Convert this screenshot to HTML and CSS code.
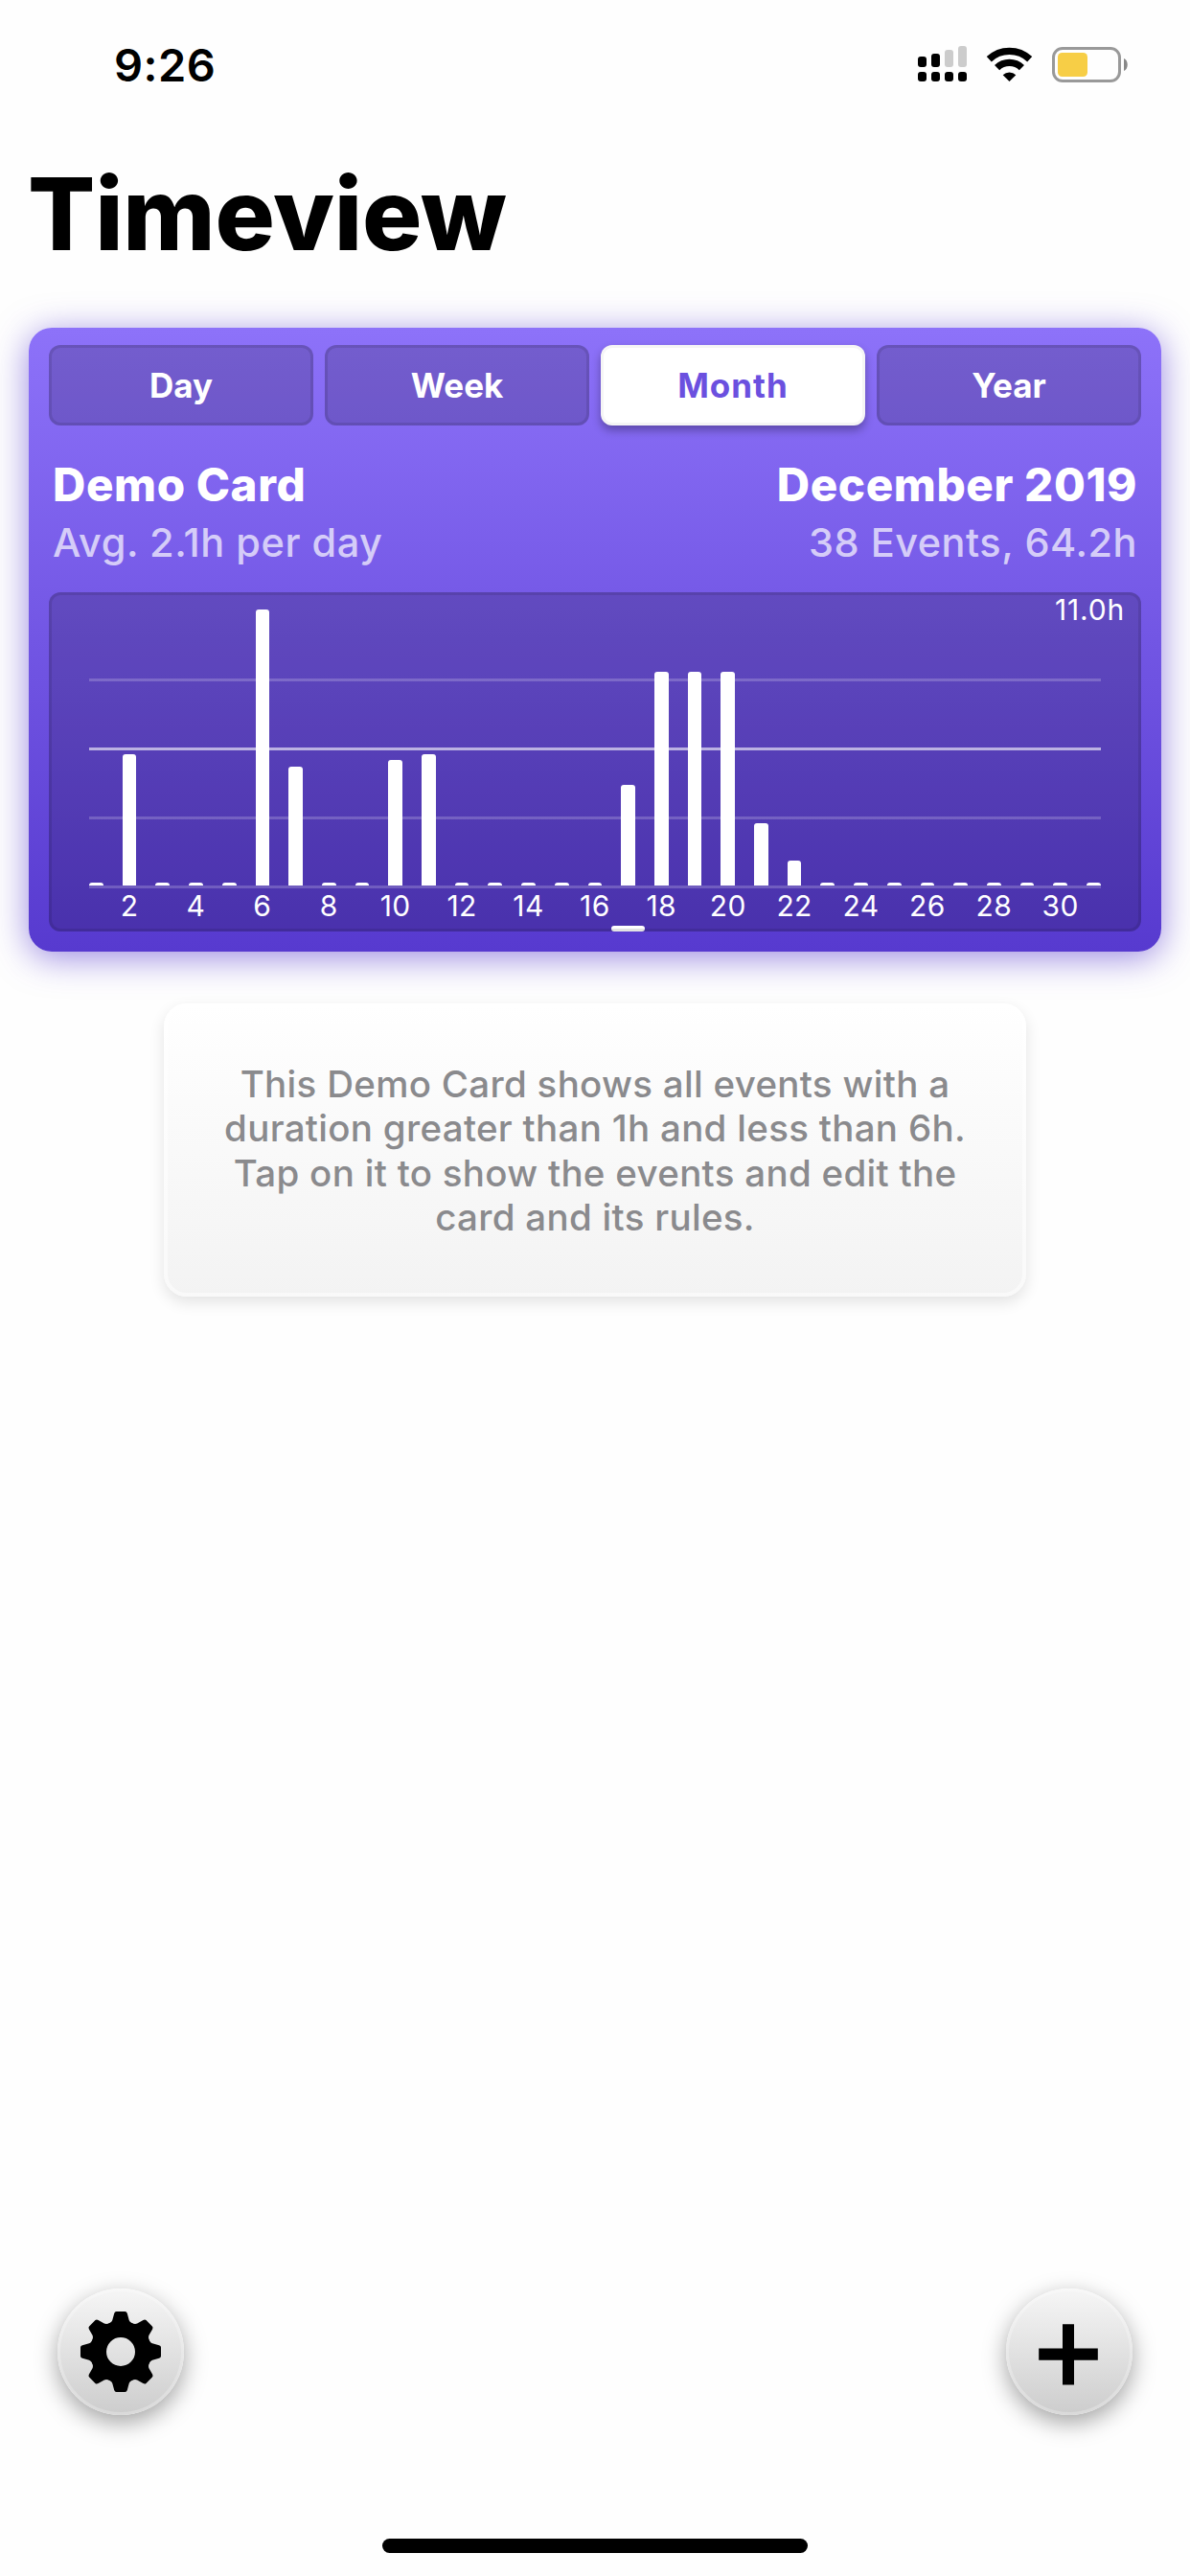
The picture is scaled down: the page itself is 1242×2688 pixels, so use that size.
FILE: index.html
```
<!DOCTYPE html>
<html lang="en">
<head>
  <meta charset="UTF-8">
  <title>Timeview</title>
  <link rel="stylesheet" href="styles.css">
</head>
<body>
  <div class="status-bar">
    <span class="time">9:26</span>
    <svg class="status-icons" width="220" height="38" viewBox="0 0 220 38">
      <g>
        <rect x="0" y="11" width="9" height="11" rx="3"/>
        <rect x="14" y="8" width="9" height="14" rx="3"/>
        <rect x="28" y="4" width="9" height="18" rx="3" fill="#ccc"/>
        <rect x="42" y="0" width="9" height="22" rx="3" fill="#ccc"/>
        <rect x="0" y="27" width="9" height="10" rx="3"/>
        <rect x="14" y="27" width="9" height="10" rx="3"/>
        <rect x="28" y="27" width="9" height="10" rx="3"/>
        <rect x="42" y="27" width="9" height="10" rx="3"/>
      </g>
      <g fill="none" stroke="#000" stroke-width="7.4">
        <path d="M74.3 13.8 A31 31 0 0 1 116.7 13.8"/>
        <path d="M82.6 22.6 A18.5 18.5 0 0 1 108.4 22.6"/>
      </g>
      <path d="M95.5 37 L88.7 30.3 A9.7 9.7 0 0 1 102.3 30.3 Z"/>
      <rect x="141.5" y="2.5" width="69" height="34" rx="9.5" fill="none" stroke="#999" stroke-width="3"/>
      <rect x="146" y="7" width="31" height="25" rx="4.5" fill="#f7ce46"/>
      <path d="M215 13 C220 15 220 24 215 26 Z" fill="#888"/>
    </svg>
  </div>

  <h1>Timeview</h1>

  <div class="card">
    <div class="tabs">
      <div class="tab">Day</div>
      <div class="tab">Week</div>
      <div class="tab active">Month</div>
      <div class="tab">Year</div>
    </div>
    <div class="row title"><span>Demo Card</span><span>December 2019</span></div>
    <div class="row sub"><span>Avg. 2.1h per day</span><span>38 Events, 64.2h</span></div>
    <div class="chart">
      <span class="max">11.0h</span>
      <div class="plot">
        <div class="bars" id="bars"></div>
      </div>
      <div class="axis" id="axis"></div>
    </div>
  </div>

  <div class="hint">This Demo Card shows all events with a<br>duration greater than 1h and less than 6h.<br>Tap on it to show the events and edit the<br>card and its rules.</div>

  <div class="toolbar">
    <div class="round">
      <svg width="84" height="84" viewBox="-42 -42 84 84">
        <defs>
          <path id="tooth" d="M-14 -28.8 Q-9.5 -30.5 -8.7 -33 L-6.8 -40 Q-6.2 -42 -4.5 -42 H4.5 Q6.2 -42 6.8 -40 L8.7 -33 Q9.5 -30.5 14 -28.8 L8 -20 H-8 Z"/>
        </defs>
        <circle r="23.3" fill="none" stroke="#000" stroke-width="16.6"/>
        <use href="#tooth"/>
        <use href="#tooth" transform="rotate(45)"/>
        <use href="#tooth" transform="rotate(90)"/>
        <use href="#tooth" transform="rotate(135)"/>
        <use href="#tooth" transform="rotate(180)"/>
        <use href="#tooth" transform="rotate(225)"/>
        <use href="#tooth" transform="rotate(270)"/>
        <use href="#tooth" transform="rotate(315)"/>
      </svg>
    </div>
    <div class="round">
      <svg width="132" height="132" viewBox="0 0 132 132">
        <path d="M59 37.2 H71 V62.5 H95.8 V74.7 H71 V100.5 H59 V74.7 H34.2 V62.5 H59 Z"/>
      </svg>
    </div>
  </div>
  <div class="home"></div>

  <script>
    // hours per day of the month
    const hours = [0, 5.25, 0, 0, 0, 11, 4.75, 0, 0, 5, 5.25, 0, 0, 0, 0, 0, 4, 8.5, 8.5, 8.5, 2.5, 1, 0, 0, 0, 0, 0, 0, 0, 0, 0];
    const TODAY = 17;
    const max = Math.max(...hours);

    document.getElementById('bars').innerHTML = hours
      .map(h => `<div class="bar" style="height: ${h / max * 100}%"></div>`).join('');
    document.getElementById('axis').innerHTML = hours
      .map((h, i) => `<div class="day${i + 1 === TODAY ? ' today' : ''}">${i % 2 ? i + 1 : ''}</div>`).join('');
  </script>
</body>
</html>
```
FILE: styles.css
```
* { box-sizing: border-box; }
body { margin: 0; height: 2688px; display: flex; flex-direction: column; font-family: Inter, "Liberation Sans", sans-serif; background: #fefefe; color: #000; }

.status-bar { display: flex; justify-content: space-between; padding: 40px 64px 0 119px; height: 150px; }
.time { font-size: 47px; font-weight: 580; line-height: 56px; letter-spacing: 0.5px; }
.status-icons { margin-top: 8px; }

h1 { margin: 0 0 0 29px; height: 192px; line-height: 146px; font-size: 104px; font-weight: 800; letter-spacing: -0.25px; }

.card {
  margin: 0 30px;
  height: 651px;
  padding: 18px 21px;
  border-radius: 24px;
  background: linear-gradient(#8d72f9, #573acf);
  box-shadow: 0 6px 36px rgba(87, 58, 207, 0.6);
  color: #fff;
}
.tabs { display: flex; gap: 12px; }
.tab {
  flex: 1;
  height: 84px;
  line-height: 84px;
  border-radius: 12px;
  text-align: center;
  font-size: 35px;
  font-weight: 650;
  background: rgba(0, 0, 0, 0.17);
  box-shadow: inset 0 0 0 3px rgba(0, 0, 0, 0.1);
}
.tab.active { background: #fff; color: #6b50df; letter-spacing: 1px; box-shadow: inset 0 0 0 3px rgba(0, 0, 0, 0.04), 0 5px 10px rgba(0, 0, 0, 0.3); }

.row { display: flex; justify-content: space-between; padding: 0 4px; }
.title { margin-top: 32px; height: 60px; line-height: 60px; font-size: 47.5px; font-weight: 800; letter-spacing: 0.6px; }
.sub { height: 60px; line-height: 60px; font-size: 41.5px; font-weight: 500; letter-spacing: 0.5px; color: rgba(255, 255, 255, 0.7); }

.chart {
  position: relative;
  margin-top: 22px;
  height: 354px;
  padding: 18px 42px 0;
  border-radius: 12px;
  background: rgba(0, 0, 0, 0.17);
  box-shadow: inset 0 0 0 3px rgba(0, 0, 0, 0.1);
}
.max { position: absolute; top: 0; right: 17px; font-size: 30px; line-height: 36px; letter-spacing: 0.8px; }
.plot {
  height: 291px;
  background:
    linear-gradient(rgba(255, 255, 255, 0.2), rgba(255, 255, 255, 0.2)) 0 72px / 100% 3px no-repeat,
    linear-gradient(rgba(255, 255, 255, 0.6), rgba(255, 255, 255, 0.6)) 0 144px / 100% 3px no-repeat,
    linear-gradient(rgba(255, 255, 255, 0.2), rgba(255, 255, 255, 0.2)) 0 216px / 100% 3px no-repeat,
    linear-gradient(rgba(255, 255, 255, 0.2), rgba(255, 255, 255, 0.2)) 0 288px / 100% 3px no-repeat;
}
.bars { display: flex; justify-content: space-between; align-items: flex-end; height: 288px; }
.bar { width: 14.7px; min-height: 3px; border-radius: 3px 3px 0 0; background: #fff; }
.axis { display: flex; justify-content: space-between; }
.day { position: relative; width: 14.7px; height: 45px; line-height: 37px; display: flex; justify-content: center; font-size: 30px; letter-spacing: 0.4px; }
.today::after { content: ""; position: absolute; left: -10px; bottom: 0; width: 35px; height: 6px; border-radius: 3px; background: linear-gradient(#fff 50%, #e2e2e2 50%); }

.hint {
  align-self: center;
  width: 900px;
  height: 306px;
  margin-top: 54px;
  padding-top: 61px;
  border-radius: 24px;
  background: linear-gradient(#fff, #f3f3f3);
  box-shadow: inset 0 0 0 4px rgba(255, 255, 255, 0.5), 0 6px 16px rgba(0, 0, 0, 0.11);
  text-align: center;
  font-size: 38.5px;
  font-weight: 500;
  letter-spacing: 0.3px;
  line-height: 46.4px;
  color: #8a8a8d;
}

.toolbar { display: flex; justify-content: space-between; margin-top: auto; padding: 0 60px; }
.round {
  width: 132px;
  height: 132px;
  display: flex;
  align-items: center;
  justify-content: center;
  border-radius: 50%;
  background: linear-gradient(#f6f6f6, #cdcdcd);
  box-shadow: inset 0 0 0 3px rgba(255, 255, 255, 0.25), 0 8px 24px rgba(0, 0, 0, 0.36);
}
.home { align-self: center; width: 444px; height: 15px; margin: 129px 0 24px; border-radius: 8px; background: #000; }
```
